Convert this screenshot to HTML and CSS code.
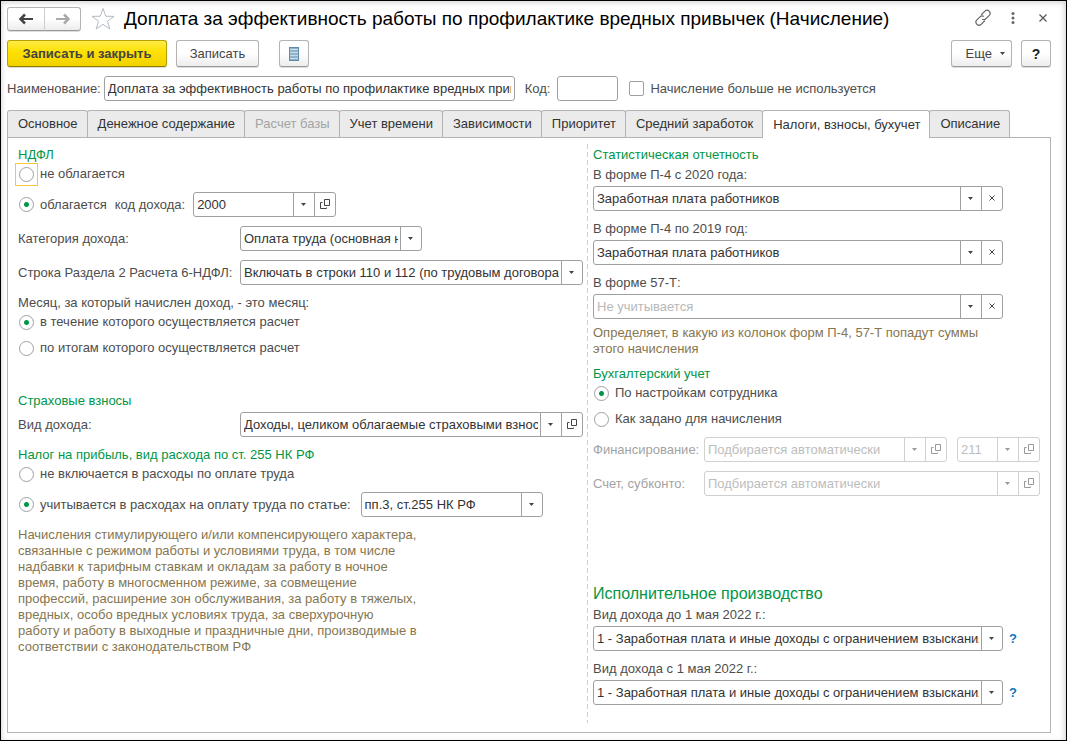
FILE: index.html
```
<!DOCTYPE html>
<html lang="ru">
<head>
<meta charset="utf-8">
<title>Доплата за эффективность работы по профилактике вредных привычек (Начисление)</title>
<link rel="stylesheet" href="styles.css">
</head>
<body>
<svg class="sprite" aria-hidden="true">
  <symbol id="open" viewBox="0 0 11 11"><path d="M4.500.500h5v6h-5zM2.500 3.500h-2v6h6v-1" fill="none" stroke="currentColor"/></symbol>
  <symbol id="clear" viewBox="0 0 11 11"><path d="M2.500 2.500l5 5M7.500 2.500l-5 5" fill="none" stroke="currentColor"/></symbol>
</svg>
<div class="window">
  <header class="titlebar">
    <div class="history">
      <button class="btn" type="button" aria-label="Назад"><svg width="16" height="12" viewBox="0 0 16 12"><path d="M15 6H4" fill="none" stroke="#444" stroke-width="2"/><path d="M7 1.500L2.500 6L7 10.500" fill="none" stroke="#444" stroke-width="2.500"/></svg></button>
      <button class="btn" type="button" aria-label="Вперед"><svg width="16" height="12" viewBox="0 0 16 12"><path d="M1 6H12" fill="none" stroke="#aaa" stroke-width="2"/><path d="M9 1.500L13.500 6L9 10.500" fill="none" stroke="#aaa" stroke-width="2.500"/></svg></button>
    </div>
    <button class="icon-btn" type="button" aria-label="В избранное"><svg width="24" height="24" viewBox="0 0 24 24"><path d="M12 1.500L14.700 9.200L23 9.400L16.400 14.300L18.900 22L12 17.300L5.100 22L7.600 14.300L1 9.400L9.300 9.200Z" fill="#fff" stroke="#b4bac2"/></svg></button>
    <h1 class="title">Доплата за эффективность работы по профилактике вредных привычек (Начисление)</h1>
    <div class="window-tools">
      <button class="icon-btn" type="button" aria-label="Получить ссылку"><svg width="18" height="18" viewBox="0 0 18 18"><g fill="none" stroke="#666" stroke-width="1.200" stroke-linecap="round"><path d="M7.500 5.500L10.700 2.300C12 1 13.900 1 15.100 2.200C16.400 3.500 16.400 5.300 15.100 6.600L12 9.700C11 10.700 9.700 10.900 8.600 10.300"/><path d="M10.500 12L7.200 15.300C6 16.500 4.100 16.500 2.900 15.300C1.600 14 1.600 12.200 2.900 10.900L6 7.800C7 6.800 8.400 6.600 9.500 7.200"/></g></svg></button>
      <button class="icon-btn" type="button" aria-label="Меню"><svg width="18" height="18" viewBox="0 0 18 18"><g fill="#666"><circle cx="9" cy="4.500" r="1.500"/><circle cx="9" cy="9" r="1.500"/><circle cx="9" cy="13.500" r="1.500"/></g></svg></button>
      <button class="icon-btn" type="button" aria-label="Закрыть"><svg width="18" height="18" viewBox="0 0 18 18"><path d="M5.500 5.500l7 7M12.500 5.500l-7 7" stroke="#555" stroke-width="1.200"/></svg></button>
    </div>
  </header>

  <div class="commands">
    <button class="btn btn-primary" type="button">Записать и закрыть</button>
    <button class="btn btn-save" type="button">Записать</button>
    <button class="btn btn-square btn-report" type="button" aria-label="Реестр"><svg width="10" height="14" viewBox="0 0 10 14"><path d="M0 0h10v14H0z" fill="#5e8bab"/><path d="M1 2.500h8M1 5.500h8M1 8.500h8M1 11.500h8" stroke="#c5dbe9" stroke-width="2"/></svg></button>
    <button class="btn btn-more" type="button">Еще <svg width="5" height="3" viewBox="0 0 5 3"><path d="M0 0h5L2.500 3z" fill="#444"/></svg></button>
    <button class="btn btn-square btn-help" type="button">?</button>
  </div>

  <div class="identity">
    <label for="name">Наименование:</label>
    <input class="text name" id="name" type="text" value="Доплата за эффективность работы по профилактике вредных привычек">
    <label for="code">Код:</label>
    <input class="text code" id="code" type="text">
    <label class="check"><input type="checkbox">Начисление больше не используется</label>
  </div>

  <nav class="tabs" role="tablist">
    <button class="tab" type="button" role="tab">Основное</button>
    <button class="tab" type="button" role="tab">Денежное содержание</button>
    <button class="tab" type="button" role="tab" disabled>Расчет базы</button>
    <button class="tab" type="button" role="tab">Учет времени</button>
    <button class="tab" type="button" role="tab">Зависимости</button>
    <button class="tab" type="button" role="tab">Приоритет</button>
    <button class="tab" type="button" role="tab">Средний заработок</button>
    <button class="tab tab-active" type="button" role="tab" aria-selected="true">Налоги, взносы, бухучет</button>
    <button class="tab" type="button" role="tab">Описание</button>
  </nav>

  <main class="panel">
    <div class="column column-left">
      <section class="group">
        <h2 class="heading">НДФЛ</h2>
        <label class="radio radio-focus"><input type="radio" name="ndfl">не облагается</label>
        <div class="row row-first">
          <label class="radio"><input type="radio" name="ndfl" checked>облагается</label>
          <label class="near" for="income-code">код дохода:</label>
          <div class="combo combo-code">
            <select id="income-code"><option>2000</option></select>
            <button type="button" aria-label="Открыть"><svg width="11" height="11"><use href="#open"/></svg></button>
          </div>
        </div>
        <div class="row">
          <label class="caption" for="category">Категория дохода:</label>
          <div class="combo combo-medium"><select id="category"><option>Оплата труда (основная налоговая база)</option></select></div>
        </div>
        <div class="row">
          <label class="caption" for="line">Строка Раздела 2 Расчета 6-НДФЛ:</label>
          <div class="combo combo-fill"><select id="line"><option>Включать в строки 110 и 112 (по трудовым договорам)</option></select></div>
        </div>
        <p class="line line-gap">Месяц, за который начислен доход, - это месяц:</p>
        <label class="radio"><input type="radio" name="month" checked>в течение которого осуществляется расчет</label>
        <label class="radio radio-next"><input type="radio" name="month">по итогам которого осуществляется расчет</label>
      </section>

      <section class="group group-insurance">
        <h2 class="heading">Страховые взносы</h2>
        <div class="row row-tight">
          <label class="caption" for="insurance">Вид дохода:</label>
          <div class="combo combo-fill">
            <select id="insurance"><option>Доходы, целиком облагаемые страховыми взносами</option></select>
            <button type="button" aria-label="Открыть"><svg width="11" height="11"><use href="#open"/></svg></button>
          </div>
        </div>
      </section>

      <section class="group group-profit">
        <h2 class="heading">Налог на прибыль, вид расхода по ст. 255 НК РФ</h2>
        <label class="radio"><input type="radio" name="profit">не включается в расходы по оплате труда</label>
        <div class="row row-first">
          <label class="radio"><input type="radio" name="profit" checked>учитывается в расходах на оплату труда по статье:</label>
          <div class="combo combo-medium combo-article"><select aria-label="Статья"><option>пп.3, ст.255 НК РФ</option></select></div>
        </div>
        <p class="note note-long">Начисления стимулирующего и/или компенсирующего характера, связанные с режимом работы и условиями труда, в том числе надбавки к тарифным ставкам и окладам за работу в ночное время, работу в многосменном режиме, за совмещение профессий, расширение зон обслуживания, за работу в тяжелых, вредных, особо вредных условиях труда, за сверхурочную работу и работу в выходные и праздничные дни, производимые в соответствии с законодательством РФ</p>
      </section>
    </div>

    <div class="column column-right">
      <section class="group">
        <h2 class="heading">Статистическая отчетность</h2>
        <div class="stack">
          <label class="line" for="p4-new">В форме П-4 с 2020 года:</label>
          <div class="combo combo-wide">
            <select id="p4-new"><option>Заработная плата работников</option></select>
            <button type="button" aria-label="Очистить"><svg width="11" height="11"><use href="#clear"/></svg></button>
          </div>
        </div>
        <div class="stack">
          <label class="line" for="p4-old">В форме П-4 по 2019 год:</label>
          <div class="combo combo-wide">
            <select id="p4-old"><option>Заработная плата работников</option></select>
            <button type="button" aria-label="Очистить"><svg width="11" height="11"><use href="#clear"/></svg></button>
          </div>
        </div>
        <div class="stack">
          <label class="line" for="f57">В форме 57-Т:</label>
          <div class="combo combo-wide combo-empty">
            <select id="f57"><option>Не учитывается</option></select>
            <button type="button" aria-label="Очистить"><svg width="11" height="11"><use href="#clear"/></svg></button>
          </div>
        </div>
        <p class="note note-short">Определяет, в какую из колонок форм П-4, 57-Т попадут суммы этого начисления</p>
      </section>

      <section class="group group-account">
        <h2 class="heading">Бухгалтерский учет</h2>
        <label class="radio"><input type="radio" name="account" checked>По настройкам сотрудника</label>
        <label class="radio radio-next"><input type="radio" name="account">Как задано для начисления</label>
        <div class="row row-first row-disabled">
          <label class="caption caption-short" for="fin">Финансирование:</label>
          <div class="combo combo-fill">
            <select id="fin" disabled><option>Подбирается автоматически</option></select>
            <button type="button" aria-label="Открыть" disabled><svg width="11" height="11"><use href="#open"/></svg></button>
          </div>
          <div class="combo combo-kosgu">
            <select aria-label="КОСГУ" disabled><option>211</option></select>
            <button type="button" aria-label="Открыть" disabled><svg width="11" height="11"><use href="#open"/></svg></button>
          </div>
        </div>
        <div class="row row-disabled">
          <label class="caption caption-short" for="acc">Счет, субконто:</label>
          <div class="combo combo-fill">
            <select id="acc" disabled><option>Подбирается автоматически</option></select>
            <button type="button" aria-label="Открыть" disabled><svg width="11" height="11"><use href="#open"/></svg></button>
          </div>
        </div>
      </section>

      <section class="group group-court">
        <h2 class="heading heading-large">Исполнительное производство</h2>
        <div class="stack">
          <label class="line" for="before">Вид дохода до 1 мая 2022 г.:</label>
          <div class="with-hint">
            <div class="combo combo-wide"><select id="before"><option>1 - Заработная плата и иные доходы с ограничением взыскания</option></select></div>
            <button class="hint" type="button">?</button>
          </div>
        </div>
        <div class="stack">
          <label class="line" for="after">Вид дохода с 1 мая 2022 г.:</label>
          <div class="with-hint">
            <div class="combo combo-wide"><select id="after"><option>1 - Заработная плата и иные доходы с ограничением взыскания</option></select></div>
            <button class="hint" type="button">?</button>
          </div>
        </div>
      </section>
    </div>
  </main>
</div>
</body>
</html>
```

FILE: styles.css
```
*,
*::before {
  box-sizing: border-box;
}

body {
  margin: 0;
  font: 13px/20px "Liberation Sans", Arial, sans-serif;
  color: #4d4d4d;
  background: #fff;
}

button,
input,
select {
  margin: 0;
  font: inherit;
  color: inherit;
}

h1,
h2,
p {
  margin: 0;
  font-weight: normal;
}

svg {
  display: block;
}

.sprite {
  position: absolute;
  width: 0;
  height: 0;
}

.window {
  display: flex;
  flex-direction: column;
  min-height: 100vh;
  padding: 4px 15px 7px 6px;
  border: 1px solid #000;
  box-shadow: inset 0 4px 6px -3px #d4d0d4, inset 4px 0 5px -3px #e0dce0, inset -4px 0 6px -3px #d4d0d4;
}

/* Title bar */

.titlebar {
  display: flex;
  align-items: center;
  height: 28px;
}

.history {
  display: flex;
  margin-right: 10px;
}

.history .btn {
  display: flex;
  align-items: center;
  justify-content: center;
  width: 37px;
  height: 24px;
}

.history .btn:first-child {
  width: 38px;
  border-radius: 3px 0 0 3px;
}

.history .btn:last-child {
  margin-left: -1px;
  border-left-color: #ccc;
  border-radius: 0 3px 3px 0;
}

.icon-btn {
  padding: 0;
  border: 0;
  background: none;
}

.title {
  flex: 1;
  min-width: 0;
  margin-left: 9px;
  font-size: 19px;
  line-height: 26px;
  color: #000;
  white-space: nowrap;
}

.window-tools {
  display: flex;
  gap: 12px;
  margin: 0 -1px 3px 0;
}

/* Command bar */

.btn {
  height: 27px;
  padding: 0;
  border: 1px solid #b3b3b3;
  border-bottom-color: #999;
  border-radius: 3px;
  background: linear-gradient(#fff 50%, #ececec);
  box-shadow: 0 1px 0 #ddd;
  color: #444;
}

.commands {
  display: flex;
  align-items: center;
  margin-top: 7px;
}

.btn-primary {
  width: 160px;
  border-color: #b8a000;
  border-bottom-color: #8f7d00;
  background: linear-gradient(#ffec45, #ffe000 45%, #f2d200);
  font-weight: bold;
}

.btn-save {
  width: 83px;
  margin-left: 9px;
}

.btn-square {
  display: flex;
  align-items: center;
  justify-content: center;
  width: 30px;
}

.btn-report {
  margin-left: 20px;
}

.btn-more {
  display: flex;
  align-items: center;
  justify-content: flex-end;
  gap: 8px;
  width: 61px;
  margin-left: auto;
  padding-right: 6px;
}

.btn-help {
  margin-left: 9px;
  font-size: 14px;
  font-weight: bold;
  color: #222;
}

/* Name and code */

.identity {
  display: flex;
  align-items: center;
  margin-top: 9px;
}

.text {
  height: 25px;
  padding: 0 3px;
  border: 1px solid #a0a0a0;
  border-radius: 3px;
  background: #fff;
  color: #333;
}

.name {
  width: 411px;
  margin: 0 10px 0 3px;
}

.code {
  width: 61px;
  margin-left: 7px;
}

.check {
  display: flex;
  align-items: center;
  gap: 6px;
  margin-left: 11px;
}

.check input {
  appearance: none;
  width: 15px;
  height: 15px;
  border: 1px solid #a0a0a0;
  border-radius: 2px;
  background: #fff;
}

/* Tabs */

.tabs {
  display: flex;
  margin-top: 9px;
}

.tab {
  height: 27px;
  margin-right: -1px;
  padding: 0 9px 0 10px;
  border: 1px solid #b3b3b3;
  border-bottom: 0;
  border-radius: 3px 3px 0 0;
  background: #ebebeb;
  color: #333;
  white-space: nowrap;
}

.tab:disabled {
  color: #a3a3a3;
}

.tab-active {
  z-index: 1;
  height: 28px;
  margin-bottom: -1px;
  background: #fff;
}

.panel {
  display: grid;
  flex: 1;
  grid-template-columns: minmax(0, 570fr) minmax(0, 462fr);
  padding: 6px 0 9px 10px;
  border: 1px solid #b3b3b3;
}

.column-left {
  padding-right: 5px;
  background: repeating-linear-gradient(#d0d0d0 0 5px, transparent 5px 8px) right top / 1px 100% no-repeat;
}

.column-right {
  padding: 0 10px 0 5px;
}

/* Form groups */

.heading {
  padding-top: 2px;
  font-size: 13px;
  line-height: 18px;
  color: #009646;
}

.heading-large {
  padding-top: 0;
  font-size: 16px;
  line-height: 20px;
}

.group-insurance {
  margin-top: 32px;
}

.group-profit {
  margin-top: 7px;
}

.group-account {
  margin-top: 6px;
}

.group-court {
  margin-top: 88px;
}

.row {
  display: flex;
  align-items: center;
  margin-top: 9px;
}

.row-first {
  margin-top: 8px;
}

.row-tight {
  margin-top: 2px;
}

.line {
  display: block;
  padding-top: 2px;
  line-height: 18px;
}

.line-gap {
  margin-top: 7px;
}

.caption {
  flex: none;
  width: 222px;
  white-space: nowrap;
}

.caption-short {
  width: 111px;
}

.near {
  margin: 0 8px;
}

.stack + .stack {
  margin-top: 7px;
}

.stack .line {
  margin-bottom: 2px;
}

.note {
  line-height: 16px;
  color: #857650;
}

.note-long {
  max-width: 400px;
  margin-top: 10px;
}

.note-short {
  max-width: 410px;
  margin-top: 6px;
}

/* Radio buttons */

.radio {
  display: flex;
  align-items: center;
  gap: 6px;
  height: 20px;
  padding-left: 1px;
}

.radio-next {
  margin-top: 6px;
}

.radio input {
  flex: none;
  appearance: none;
  width: 15px;
  height: 15px;
  border: 1px solid #a0a0a0;
  border-radius: 50%;
  background: #fff;
}

.radio input:checked {
  background: radial-gradient(circle, #009646 2px, #fff 3px);
}

.radio-focus {
  position: relative;
}

.radio-focus::before {
  content: "";
  position: absolute;
  top: -1px;
  left: -3px;
  width: 23px;
  height: 23px;
  border: 1px solid #f5c83c;
}

/* Drop-down fields */

.combo {
  display: flex;
  height: 25px;
  border: 1px solid #a0a0a0;
  border-radius: 3px;
  background: #fff;
  color: #333;
  overflow: hidden;
}

.combo select {
  flex: 1;
  min-width: 0;
  appearance: none;
  padding: 0 23px 0 3px;
  border: 0;
  border-radius: 0;
  background:
    url("data:image/svg+xml,%3Csvg xmlns='http://www.w3.org/2000/svg' width='5' height='3'%3E%3Cpath d='M0 0h5L2.500 3z' fill='%23444'/%3E%3C/svg%3E") right 8px top 10px no-repeat,
    linear-gradient(#a0a0a0, #a0a0a0) right 20px top / 1px 100% no-repeat;
  opacity: 1;
}

.combo button {
  display: flex;
  flex: none;
  align-items: center;
  justify-content: center;
  width: 21px;
  padding: 0;
  border: 0;
  border-left: 1px solid #a0a0a0;
  background: none;
  color: #444;
}

.combo-code {
  width: 143px;
}

.combo-medium {
  width: 182px;
}

.combo-article {
  margin-left: 10px;
}

.combo-fill {
  flex: 1;
  min-width: 0;
}

.combo-wide {
  width: 410px;
}

.combo-kosgu {
  width: 83px;
  margin-left: 10px;
}

.combo-empty select {
  color: #b8b8b8;
}

.row-disabled {
  color: #a3a3a3;
}

.row-disabled .combo {
  border-color: #d0d0d0;
  color: #bdbdbd;
}

.row-disabled .combo select {
  background:
    url("data:image/svg+xml,%3Csvg xmlns='http://www.w3.org/2000/svg' width='5' height='3'%3E%3Cpath d='M0 0h5L2.500 3z' fill='%23999'/%3E%3C/svg%3E") right 8px top 10px no-repeat,
    linear-gradient(#d0d0d0, #d0d0d0) right 20px top / 1px 100% no-repeat;
}

.row-disabled .combo button {
  border-color: #d0d0d0;
  color: #999;
}

.with-hint {
  display: flex;
  align-items: center;
  gap: 6px;
}

.hint {
  padding: 0;
  border: 0;
  background: none;
  font-weight: bold;
  color: #0c78c0;
}
```
